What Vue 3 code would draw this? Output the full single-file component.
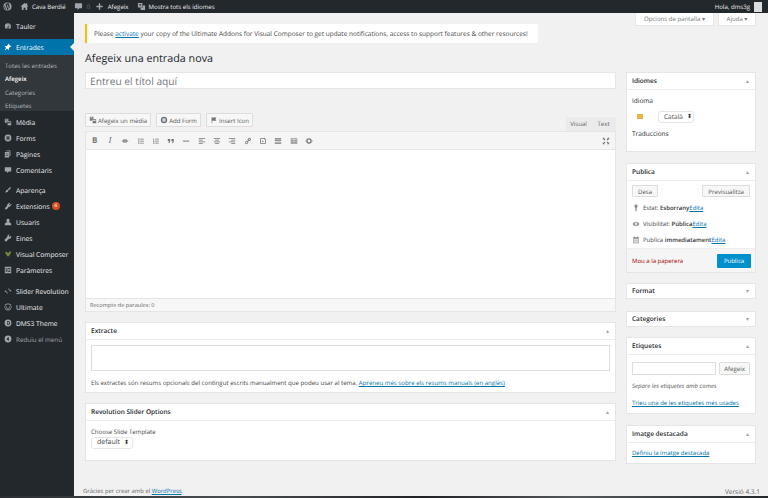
<script setup>
const icons = {
  wp: "M10 1a9 9 0 1 0 0 18 9 9 0 0 0 0-18zM3 10c0-1 .2-2 .6-2.900L7 17a7 7 0 0 1-4-7zm7 7c-.7 0-1.300-.1-2-.3l2.100-6.100 2.200 5.900A7 7 0 0 1 10 17zm1-10.300c.4 0 .8-.1.8-.1.4 0 .3-.6 0-.6 0 0-1.100.1-1.800.1S8.200 6 8.200 6c-.4 0-.4.600 0 .6l.7.1 1 2.800-1.500 4.400L6 6.700c.4 0 .8-.1.8-.1.400 0 .3-.6 0-.6L4.500 6A7 7 0 0 1 15 4.800c-1 0-1.600.8-1.600 1.600 0 .8.400 1.400.9 2.200.3.600.6 1.300.6 2.300 0 .7-.3 1.500-.6 2.600l-.8 2.600z",
  home: "M10 2 1 10h3v8h4v-5h4v5h4v-8h3l-3-2.700V3h-3v1.600z",
  comment: "M3 3h14a1 1 0 0 1 1 1v9a1 1 0 0 1-1 1h-5l-4 4v-4H3a1 1 0 0 1-1-1V4a1 1 0 0 1 1-1z",
  plus: "M8.500 3h3v5.500H17v3h-5.500V17h-3v-5.500H3v-3h5.500z",
  translate: "M2 2h10v10H2zM4 5v1h2.300C6 7.200 5 8.200 4 8.700l.5.9c1-.5 1.900-1.300 2.500-2.200.5.800 1.100 1.500 2 2l.5-.9C8.700 8 8 7.200 7.800 6H10V5zM13 8h5v10H8v-5h5z",
  dashboard: "M10 3a8 8 0 0 0-8 8c0 2 .7 3.700 1.900 5h12.200A8 8 0 0 0 10 3zm0 2a1 1 0 1 1 0 2 1 1 0 0 1 0-2zM5 10a1 1 0 1 1 0 2 1 1 0 0 1 0-2zm10 0a1 1 0 1 1 0 2 1 1 0 0 1 0-2zm-1.500-3 .9.5-3 5.100a1.800 1.800 0 1 1-1-.6z",
  pin: "M11 2l7 7-1.500 1-1-.5-3.500 3.500.5 3-1.500 1.500-3.500-3.500L3 18l-1 0 0-1 3.500-4.500L2 9l1.500-1.500 3 .5L10 4.500 9.500 3.500z",
  media: "M2 2h9v7H7v3H2zM4 4v3l2-2 2 2V4zM9 8h9v10H9zm2 2v4l2.500-2 2.500 2v-4z",
  forms: "M10 1.500a8.500 8.500 0 1 0 0 17 8.500 8.500 0 0 0 0-17zM6 6h8v2H6zm0 3h8v2H6zm0 3h8v2H6z",
  pages: "M6 1h9a1 1 0 0 1 1 1v13h-2V3H6zM3 5h9a1 1 0 0 1 1 1v12a1 1 0 0 1-1 1H3a1 1 0 0 1-1-1V6a1 1 0 0 1 1-1zm1 3v1h7V8zm0 3v1h7v-1zm0 3v1h7v-1z",
  brush: "M17.500 2.500c.8.8-3 6-5.500 8l-2.500-2.500c2-2.500 7.200-6.300 8-5.500zM8.500 9l2.500 2.500c-.3 2.800-3.500 5.500-9 5 2 -1 2-2.500 3-4.500.6-1.200 2-2.500 3.500-3z",
  plugin: "M13 2l2 1.200-2 3.400 2.200 1.300 2-3.400 1.700 1-2.500 4.400c-1 1.700-2.900 2.300-4.600 1.700L9 16c-.9 1.500-2.700 2.400-5 2l-2 .5.500-2 1.700-3.300 3.500-3c-.6-1.500-.3-3 .6-4.200z",
  user: "M10 2a4 4 0 0 1 2.500 7.100c.2 1 .9 1.400 2 1.900 1.700.7 3.500 1.700 3.500 5v2H2v-2c0-3.300 1.800-4.300 3.500-5 1.100-.5 1.800-.9 2-1.900A4 4 0 0 1 10 2z",
  wrench: "M17.500 4.500 15 7l-2.300-.7L12 4l2.500-2.500a4.500 4.500 0 0 0-6 5.500L2 13.500a2 2 0 0 0 0 3L3.500 18a2 2 0 0 0 3 0L13 11.500a4.500 4.500 0 0 0 4.500-7z",
  heart: "M3 5c3-1 5 0 7 3 2-3 4-5 8-5-1 5-3 10-8 14C7 14 4 10 3 5z",
  settings: "M2 2h16v16H2zM4 5v2h3V5zm5 0v2h7V5zM4 9v2h7V9zm9 0v2h3V9zM4 13v2h3v-2zm5 0v2h7v-2z",
  slider: "M10 4a6 6 0 0 1 5.700 4H19l-3 4-3-4h1.200A4.500 4.500 0 0 0 10 5.500zM10 16a6 6 0 0 1-5.700-4H1l3-4 3 4H5.800A4.500 4.500 0 0 0 10 14.500z",
  ring: "M10 1.500a8.500 8.500 0 1 0 0 17 8.500 8.500 0 0 0 0-17zm0 1.500a7 7 0 1 1 0 14 7 7 0 0 1 0-14zM6 8h1.500v3.500a2.500 2.500 0 0 0 5 0V8H14v3.500a4 4 0 0 1-8 0z",
  dms: "M10 1.500a8.500 8.500 0 1 0 0 17 8.500 8.500 0 0 0 0-17zM8 5h2a5 5 0 0 1 0 10H8zm1.500 1.800v6.400a3.200 3.200 0 0 0 0-6.400z",
  collapse: "M10 1.500a8.500 8.500 0 1 0 0 17 8.500 8.500 0 0 0 0-17zM12 5v10L6 10z",
  flagpin: "M10 1.500a4 4 0 0 1 1.500 7.700V18h-3V9.200A4 4 0 0 1 10 1.500z",
  eye: "M10 4.500c4 0 7 2.700 8.500 5.500-1.500 2.800-4.500 5.500-8.500 5.500S3 12.800 1.500 10C3 7.200 6 4.500 10 4.500zm0 2a3.500 3.500 0 1 0 0 7 3.500 3.500 0 0 0 0-7zm0 2a1.500 1.500 0 1 1 0 3 1.500 1.500 0 0 1 0-3z",
  calendar: "M3 3h2V1.500h2V3h6V1.500h2V3h2v15H3zm1.500 4v9.500h11V7zM6 8.500h2v2H6zm3 0h2v2H9zm3 0h2v2h-2zm-6 3h2v2H6zm3 0h2v2H9zm3 0h2v2h-2z",
  flag: "M4 3h1.500v1H16l-2.500 4 2.500 4H5.500v6H4z",
  formIcon: "M10 2a8 8 0 1 0 0 16 8 8 0 0 0 0-16zM6 6h8v2H6zm0 3h8v2H6zm0 3h8v2H6z",
  strike: "M2 9h16v2H2zM5 6h10v2H5zM5 12h10v2H5z",
  ul: "M3 4h3v3H3zm5 .5h9v2H8zM3 9h3v3H3zm5 .500h9v2H8zM3 14h3v3H3zm5 .500h9v2H8z",
  ol: "M3 4h2v3H3zm5 .5h9v2H8zM3 9h3v3H3zm5 .500h9v2H8zM3 14h3v3H3zm5 .500h9v2H8z",
  quote: "M2 5h6v5c0 3-1.500 5-4 5.500V13c1-.3 1.500-1 1.500-2.500H2zm9 0h6v5c0 3-1.500 5-4 5.500V13c1-.3 1.500-1 1.500-2.500H11z",
  hr: "M2 9h16v2.500H2z",
  left: "M2 3h16v2H2zm0 4h10v2H2zm0 4h16v2H2zm0 4h10v2H2z",
  center: "M2 3h16v2H2zm3 4h10v2H5zm-3 4h16v2H2zm3 4h10v2H5z",
  right: "M2 3h16v2H2zm6 4h10v2H8zm-6 4h16v2H2zm6 4h10v2H8z",
  link: "M11 3.500a3.500 3.500 0 0 1 5.500 4.500L14 10.500l-1.500-1.500L15 6.500a1.500 1.500 0 0 0-2.500-1.500L10 7.500 8.500 6zM6 8.500l1.500 1.500L5 12.500A1.500 1.500 0 0 0 7.500 15L10 12.500l1.500 1.500L9 16.500A3.500 3.500 0 0 1 3.500 12zM12 6.500 13.500 8 8 13.500 6.500 12z",
  unlink: "M3 3h9v2H5v10h10V9h2v8H3zM7 13l2-5 3 3zM13 2l5 5-1.500 1.500-5-5z",
  more: "M2 3h16v3H2zm0 5h16v2H2zm0 4h16v2H2zm0 3.500h16v2H2z",
  table: "M2 3h16v14H2zm1.500 1.500v3h3v-3zm4.500 0v3h4v-3zm5.500 0v3h3v-3zM3.500 9v3h3V9zM8 9v3h4V9zm5.500 0v3h3V9zm-10 4.500v2h3v-2zm4.500 0v2h4v-2zm5.500 0v2h3v-2z",
  target: "M10 3a7 7 0 1 0 0 14 7 7 0 0 0 0-14zm0 3.500a3.500 3.500 0 1 1 0 7 3.500 3.500 0 0 1 0-7zM1 9h3v2H1zm15 0h3v2h-3z",
  expand: "M2 2h5L5.500 3.500 8.500 6.500 6.500 8.500 3.500 5.500 2 7zM18 2v5l-1.500-1.500-3 3-2-2 3-3L13 2zM2 18v-5l1.500 1.500 3-3 2 2-3 3L7 18zM18 18h-5l1.500-1.500-3-3 2-2 3 3L18 13z",
};

const menuTop = [
  { label: "Tauler", icon: "dashboard", cls: "row-tauler" },
  { label: "Entrades", icon: "pin", cls: "row-active" },
];
const subMenu = [
  { label: "Totes les entrades" },
  { label: "Afegeix", current: true },
  { label: "Categories" },
  { label: "Etiquetes" },
];
const menuA = [
  { label: "Mèdia", icon: "media" },
  { label: "Forms", icon: "forms" },
  { label: "Pàgines", icon: "pages" },
  { label: "Comentaris", icon: "comment" },
];
const menuB = [
  { label: "Aparença", icon: "brush" },
  { label: "Extensions", icon: "plugin", badge: "4" },
  { label: "Usuaris", icon: "user" },
  { label: "Eines", icon: "wrench" },
  { label: "Visual Composer", icon: "heart", green: true },
  { label: "Paràmetres", icon: "settings" },
];
const menuC = [
  { label: "Slider Revolution", icon: "slider" },
  { label: "Ultimate", icon: "ring" },
  { label: "DMS3 Theme", icon: "dms" },
];
const toolbar = ["strike", "ul", "ol", "quote", "hr", "left", "center", "right", "link", "unlink", "more", "table", "target"];
</script>

<template>
  <div class="page">
    <header class="adminbar">
      <svg class="ab-ico wp" viewBox="0 0 20 20"><path :d="icons.wp" /></svg>
      <svg class="ab-ico home" viewBox="0 0 20 20"><path :d="icons.home" /></svg>
      <span class="ab-site">Cava Berdié</span>
      <svg class="ab-ico cmt" viewBox="0 0 20 20"><path :d="icons.comment" /></svg>
      <span class="ab-zero">0</span>
      <svg class="ab-ico plus" viewBox="0 0 20 20"><path :d="icons.plus" /></svg>
      <span class="ab-new">Afegeix</span>
      <svg class="ab-ico lang" viewBox="0 0 20 20"><path :d="icons.translate" /></svg>
      <span>Mostra tots els idiomes</span>
      <span class="ab-hello">Hola, dms3g</span>
      <span class="avatar"></span>
    </header>

    <div class="shell">
      <aside class="sidebar">
        <nav class="menu">
          <a v-for="m in menuTop" :key="m.label" class="row" :class="m.cls">
            <svg viewBox="0 0 20 20"><path :d="icons[m.icon]" /></svg>{{ m.label }}
          </a>
          <div class="sub">
            <a v-for="s in subMenu" :key="s.label" :class="{ current: s.current }">{{ s.label }}</a>
          </div>
          <div class="group">
            <a v-for="m in menuA" :key="m.label" class="row">
              <svg viewBox="0 0 20 20"><path :d="icons[m.icon]" /></svg>{{ m.label }}
            </a>
          </div>
          <div class="group wider">
            <a v-for="m in menuB" :key="m.label" class="row">
              <svg viewBox="0 0 20 20" :class="{ green: m.green }"><path :d="icons[m.icon]" /></svg>{{ m.label }}
              <span v-if="m.badge" class="badge">{{ m.badge }}</span>
            </a>
          </div>
          <div class="group">
            <a v-for="m in menuC" :key="m.label" class="row">
              <svg viewBox="0 0 20 20"><path :d="icons[m.icon]" /></svg>{{ m.label }}
            </a>
            <a class="row collapse">
              <svg viewBox="0 0 20 20"><path :d="icons.collapse" /></svg>Reduïu el menú
            </a>
          </div>
        </nav>
      </aside>

      <main class="content">
        <div class="meta-tabs">
          <span class="meta-tab wide">Opcions de pantalla ▾</span>
          <span class="meta-tab">Ajuda ▾</span>
        </div>

        <div class="notice">
          Please <a>activate</a> your copy of the Ultimate Addons for Visual Composer to get update notifications, access to support features &amp; other resources!
        </div>
        <h1>Afegeix una entrada nova</h1>

        <div class="columns">
          <section class="left">
            <div class="title-input">Entreu el títol aquí</div>

            <div class="media-row">
              <span class="btn"><svg viewBox="0 0 20 20"><path :d="icons.media" /></svg>Afegeix un mèdia</span>
              <span class="btn"><svg viewBox="0 0 20 20"><path :d="icons.formIcon" /></svg>Add Form</span>
              <span class="btn"><svg viewBox="0 0 20 20"><path :d="icons.flag" /></svg>Insert Icon</span>
              <span class="tabs"><span class="tab">Visual</span><span class="tab">Text</span></span>
            </div>

            <div class="editor">
              <div class="toolbar">
                <span class="tool b">B</span>
                <span class="tool i">I</span>
                <span v-for="t in toolbar" :key="t" class="tool"><svg viewBox="0 0 20 20"><path :d="icons[t]" /></svg></span>
                <span class="tool expand"><svg viewBox="0 0 20 20"><path :d="icons.expand" /></svg></span>
              </div>
              <div class="editor-body"></div>
              <div class="status">Recompte de paraules: 0</div>
            </div>

            <div class="box">
              <div class="box-head">Extracte<span class="caret">▴</span></div>
              <div class="excerpt">
                <div class="textarea"></div>
                <p>Els extractes són resums opcionals del contingut escrits manualment que podeu usar al tema. <a>Apreneu més sobre els resums manuals (en anglès)</a></p>
              </div>
            </div>

            <div class="box">
              <div class="box-head">Revolution Slider Options<span class="caret">▴</span></div>
              <div class="rev">
                <div>Choose Slide Template</div>
                <span class="select default-sel">default<span class="updown">⬍</span></span>
              </div>
            </div>
          </section>

          <section class="right">
            <div class="box side idiomes">
              <div class="box-head">Idiomes<span class="caret">▴</span></div>
              <div class="side-body">
                <div>Idioma</div>
                <div class="lang-row">
                  <span class="flag"></span>
                  <span class="select">Català<span class="updown">⬍</span></span>
                </div>
                <div>Traduccions</div>
              </div>
            </div>

            <div class="box side publish">
              <div class="box-head">Publica<span class="caret">▴</span></div>
              <div class="pub-actions">
                <span class="btn flat">Desa</span>
                <span class="btn flat">Previsualitza</span>
              </div>
              <div class="pub-line"><svg viewBox="0 0 20 20"><path :d="icons.flagpin" /></svg>Estat: <b>Esborrany</b> <a>Edita</a></div>
              <div class="pub-line"><svg viewBox="0 0 20 20"><path :d="icons.eye" /></svg>Visibilitat: <b>Pública</b> <a>Edita</a></div>
              <div class="pub-line"><svg viewBox="0 0 20 20"><path :d="icons.calendar" /></svg>Publica <b>immediatament</b> <a>Edita</a></div>
              <div class="pub-foot">
                <span class="trash">Mou a la paperera</span>
                <span class="primary">Publica</span>
              </div>
            </div>

            <div class="box side format">
              <div class="box-head closed">Format<span class="caret">▾</span></div>
            </div>
            <div class="box side cats">
              <div class="box-head closed">Categories<span class="caret">▾</span></div>
            </div>

            <div class="box side">
              <div class="box-head">Etiquetes<span class="caret">▴</span></div>
              <div class="side-body tags">
                <div class="tag-row"><span class="tag-input"></span><span class="btn flat">Afegeix</span></div>
                <p><i>Separe les etiquetes amb comes</i></p>
                <a>Trieu una de les etiquetes més usades</a>
              </div>
            </div>

            <div class="box side">
              <div class="box-head">Imatge destacada<span class="caret">▴</span></div>
              <div class="side-body thumb"><a>Definiu la imatge destacada</a></div>
            </div>
          </section>
        </div>

        <footer class="foot">
          <span>Gràcies per crear amb el <a>WordPress</a>.</span>
          <span>Versió 4.3.1</span>
        </footer>
      </main>
    </div>
    <div class="desktop-strip"></div>
  </div>
</template>

<style>
html,
body {
  margin: 0;
  background: #f1f1f1;
}
</style>

<style scoped>
.page {
  width: 768px;
  height: 498px;
  display: flex;
  flex-direction: column;
  overflow: hidden;
  font-family: "Open Sans", sans-serif;
  font-size: 6.500px;
  color: #444;
  background: #f1f1f1;
  text-rendering: geometricPrecision;
}

svg {
  fill: currentColor;
  flex: none;
}

a {
  color: #0073aa;
}

.adminbar {
  height: 13px;
  flex: none;
  display: flex;
  align-items: center;
  background: #23282d;
  color: #eee;
  font-size: 6.100px;
  white-space: nowrap;
}

.ab-ico {
  width: 9px;
  height: 9px;
  color: #a0a5aa;
}

.wp {
  margin: 0 0 0 3px;
}

.home {
  margin-left: 8px;
}

.ab-site {
  margin-left: 3px;
}

.cmt {
  margin-left: 8px;
}

.ab-zero {
  margin-left: 4px;
  color: #6d7378;
}

.plus {
  margin-left: 5px;
}

.ab-new {
  margin-left: 3.500px;
}

.lang {
  margin: 0 2.500px 0 8.500px;
}

.ab-hello {
  margin-left: auto;
}

.avatar {
  width: 8px;
  height: 10px;
  margin: 0 6px 0 4px;
  background: #dcdcdc;
}

.shell {
  flex: 1;
  min-height: 0;
  display: flex;
}

.sidebar {
  width: 74px;
  flex: none;
  background: #23282d;
  color: #eee;
  font-size: 6.700px;
}

.menu {
  padding-top: 5px;
}

.row {
  height: 16px;
  display: flex;
  align-items: center;
  padding-left: 4px;
  color: #eee;
  white-space: nowrap;
  position: relative;
}

.row svg {
  width: 8px;
  height: 8px;
  margin-right: 4px;
  color: #a0a5aa;
}

.row svg.green {
  color: #6d8a3a;
}

.row-tauler {
  margin-bottom: 5px;
}

.row-active {
  background: #0073aa;
  color: #fff;
}

.row-active svg {
  color: #fff;
}

.row-active::after {
  content: "";
  position: absolute;
  right: 0;
  top: 4px;
  border: 4px solid transparent;
  border-right-color: #f1f1f1;
  border-left-width: 0;
}

.sub {
  background: #32373c;
  padding: 4px 0 1px 5px;
  height: 51px;
  font-size: 6.100px;
  margin-bottom: 3px;
}

.sub a {
  display: block;
  height: 13.300px;
  line-height: 13.300px;
  color: #b4b9be;
}

.sub a.current {
  color: #fff;
  font-weight: 600;
}

.group {
  margin-bottom: 4px;
}

.group.wider {
  margin-bottom: 5px;
}

.badge {
  width: 8px;
  height: 8px;
  margin-left: 2px;
  border-radius: 50%;
  background: #d54e21;
  color: #fff;
  font-size: 5px;
  line-height: 8px;
  text-align: center;
}

.collapse {
  color: #a0a5aa;
  font-size: 6.300px;
}

.content {
  flex: 1;
  min-width: 0;
  position: relative;
  padding: 11px 12px 0 11px;
  display: flex;
  flex-direction: column;
}

.meta-tabs {
  position: absolute;
  top: 0;
  right: 12px;
  display: flex;
  gap: 4px;
}

.meta-tab {
  height: 13px;
  width: 38px;
  line-height: 12px;
  text-align: center;
  background: #fff;
  border: 1px solid #e5e5e5;
  border-top: 0;
  box-sizing: border-box;
  color: #72777c;
  font-size: 6.100px;
}

.meta-tab.wide {
  width: 79px;
}

.notice {
  width: 453px;
  height: 19px;
  box-sizing: border-box;
  line-height: 19px;
  padding-left: 7px;
  background: #fff;
  border-left: 2px solid #ffba00;
  white-space: nowrap;
  color: #444;
}

.notice a,
.box a,
.pub-line a,
.foot a {
  text-decoration: underline;
}

h1 {
  margin: 9px 0 5px;
  font-size: 10.750px;
  font-weight: 400;
  line-height: 15px;
  color: #23282d;
}

.columns {
  display: grid;
  grid-template-columns: 531px 130px;
  gap: 10px;
  align-items: start;
}

.title-input {
  height: 17px;
  line-height: 16px;
  box-sizing: border-box;
  padding-left: 4px;
  background: #fff;
  border: 1px solid #e5e5e5;
  color: #72777c;
  font-size: 10.200px;
}

.media-row {
  margin-top: 24px;
  height: 18px;
  display: flex;
  gap: 5px;
}

.btn {
  height: 14px;
  box-sizing: border-box;
  display: inline-flex;
  align-items: center;
  padding: 0 3px;
  background: #f7f7f7;
  border: 1px solid #ddd;
  border-radius: 1px;
  color: #555;
  font-size: 6.100px;
  white-space: nowrap;
}

.btn svg {
  width: 8px;
  height: 8px;
  margin-right: 1px;
  color: #6d7378;
}

.tabs {
  margin-left: auto;
  align-self: flex-end;
  display: flex;
}

.tab {
  height: 14px;
  line-height: 14px;
  width: 25px;
  text-align: center;
  color: #666;
  background: #ebebeb;
  font-size: 6.100px;
}

.editor {
  border: 1px solid #e5e5e5;
  background: #fff;
  height: 181px;
  box-sizing: border-box;
  display: flex;
  flex-direction: column;
}

.toolbar {
  height: 17px;
  flex: none;
  padding-left: 1px;
  background: #f5f5f5;
  border-bottom: 1px solid #e5e5e5;
  display: flex;
  align-items: center;
}

.tool {
  width: 15.300px;
  flex: none;
  display: flex;
  justify-content: center;
  color: #777;
  font-family: "Liberation Serif", serif;
  font-size: 9px;
  line-height: 9px;
}

.tool svg {
  width: 8px;
  height: 8px;
}

.tool.b {
  font-weight: 700;
  font-family: "Open Sans", sans-serif;
  font-size: 8px;
}

.tool.i {
  font-style: italic;
}

.tool.expand {
  margin-left: auto;
  margin-right: 1px;
}

.editor-body {
  flex: 1;
}

.status {
  height: 12px;
  flex: none;
  line-height: 12px;
  padding-left: 4px;
  background: #f7f7f7;
  border-top: 1px solid #e5e5e5;
  color: #666;
  font-size: 5.600px;
}

.box {
  background: #fff;
  border: 1px solid #e5e5e5;
  box-sizing: border-box;
  font-size: 6.100px;
}

.left .box {
  margin-top: 10px;
}

.box-head {
  height: 16px;
  line-height: 16px;
  padding: 0 6px 0 5px;
  display: flex;
  justify-content: space-between;
  border-bottom: 1px solid #eee;
  color: #23282d;
  font-size: 6.500px;
  font-weight: 600;
  box-sizing: content-box;
}

.box-head.closed {
  border-bottom: 0;
  height: 14px;
  line-height: 14px;
}

.caret {
  color: #a0a5aa;
  font-size: 6px;
  font-weight: 400;
}

.excerpt {
  padding: 5px 5px 0;
  box-sizing: border-box;
  height: 52px;
}

.textarea {
  height: 26px;
  border: 1px solid #ddd;
  box-sizing: border-box;
}

.excerpt p {
  margin: 7px 0 0;
  line-height: 10px;
  white-space: nowrap;
}

.rev {
  height: 39px;
  box-sizing: border-box;
  padding: 6px 5px 0;
  line-height: 10px;
}

.select {
  display: inline-flex;
  align-items: center;
  height: 12px;
  padding: 0 3px 0 5px;
  background: #fff;
  border: 1px solid #e5e5e5;
  border-radius: 3px;
  box-sizing: border-box;
  color: #444;
  font-size: 6.500px;
}

.default-sel {
  font-size: 7px;
}

.updown {
  margin-left: 4px;
  font-family: "DejaVu Sans", sans-serif;
  font-size: 6px;
  color: #333;
}

.side {
  margin-bottom: 11px;
}

.side-body {
  padding: 5px 5px 0;
}

.idiomes .side-body {
  height: 61px;
  padding-top: 6px;
  color: #23282d;
  box-sizing: border-box;
  font-size: 6.500px;
}

.lang-row {
  display: flex;
  align-items: center;
  height: 13px;
  margin: 5px 0 6px;
}

.flag {
  width: 6px;
  height: 5px;
  margin: 0 15px 0 5px;
  background: #e7b54a;
}

.lang-row .select {
  width: 36px;
  justify-content: space-between;
}

.side.publish {
  margin-bottom: 10px;
}

.side.format {
  margin-bottom: 12px;
}

.side.cats {
  margin-bottom: 10px;
}

.pub-actions {
  display: flex;
  justify-content: space-between;
  padding: 4px 5px 3px;
}

.pub-actions .btn {
  height: 12px;
}

.btn.flat {
  padding: 0 5px;
}

.pub-line {
  height: 16px;
  display: flex;
  align-items: center;
  padding-left: 5px;
  white-space: pre;
  font-size: 6px;
}

.pub-line svg {
  width: 8px;
  height: 8px;
  margin-right: 3px;
  color: #82878c;
}

.pub-line b {
  font-weight: 600;
  color: #333;
}

.pub-foot {
  height: 24px;
  box-sizing: border-box;
  padding: 0 4px 0 5px;
  background: #f5f5f5;
  border-top: 1px solid #eee;
  display: flex;
  align-items: center;
  justify-content: space-between;
  font-size: 6px;
}

.trash {
  color: #a00;
}

.primary {
  width: 34px;
  height: 14px;
  line-height: 14px;
  text-align: center;
  background: #0091cd;
  color: #fff;
  border-radius: 1px;
}

.tag-row {
  display: flex;
  justify-content: space-between;
}

.tag-input {
  width: 84px;
  height: 13px;
  border: 1px solid #ddd;
  box-sizing: border-box;
}

.tag-row .btn {
  height: 13px;
  padding: 0 4px;
}

.tags {
  height: 58px;
  box-sizing: border-box;
  padding-top: 7px;
  font-size: 6px;
  white-space: nowrap;
}

.tags p {
  margin: 6px 0 8px;
  line-height: 10px;
  color: #555;
}

.thumb {
  height: 20px;
  box-sizing: border-box;
  padding-top: 5px;
  line-height: 10px;
  font-size: 6px;
}

.foot {
  position: absolute;
  left: 9px;
  right: 8px;
  top: 474px;
  display: flex;
  justify-content: space-between;
  color: #666;
  font-size: 5.900px;
  line-height: 9px;
}

.foot span:last-child {
  font-size: 6.500px;
}

.desktop-strip {
  height: 2px;
  flex: none;
  background: linear-gradient(90deg, #2b2f33, #4a4d50 30%, #202225 55%, #55585b 75%, #26292c);
}
</style>
